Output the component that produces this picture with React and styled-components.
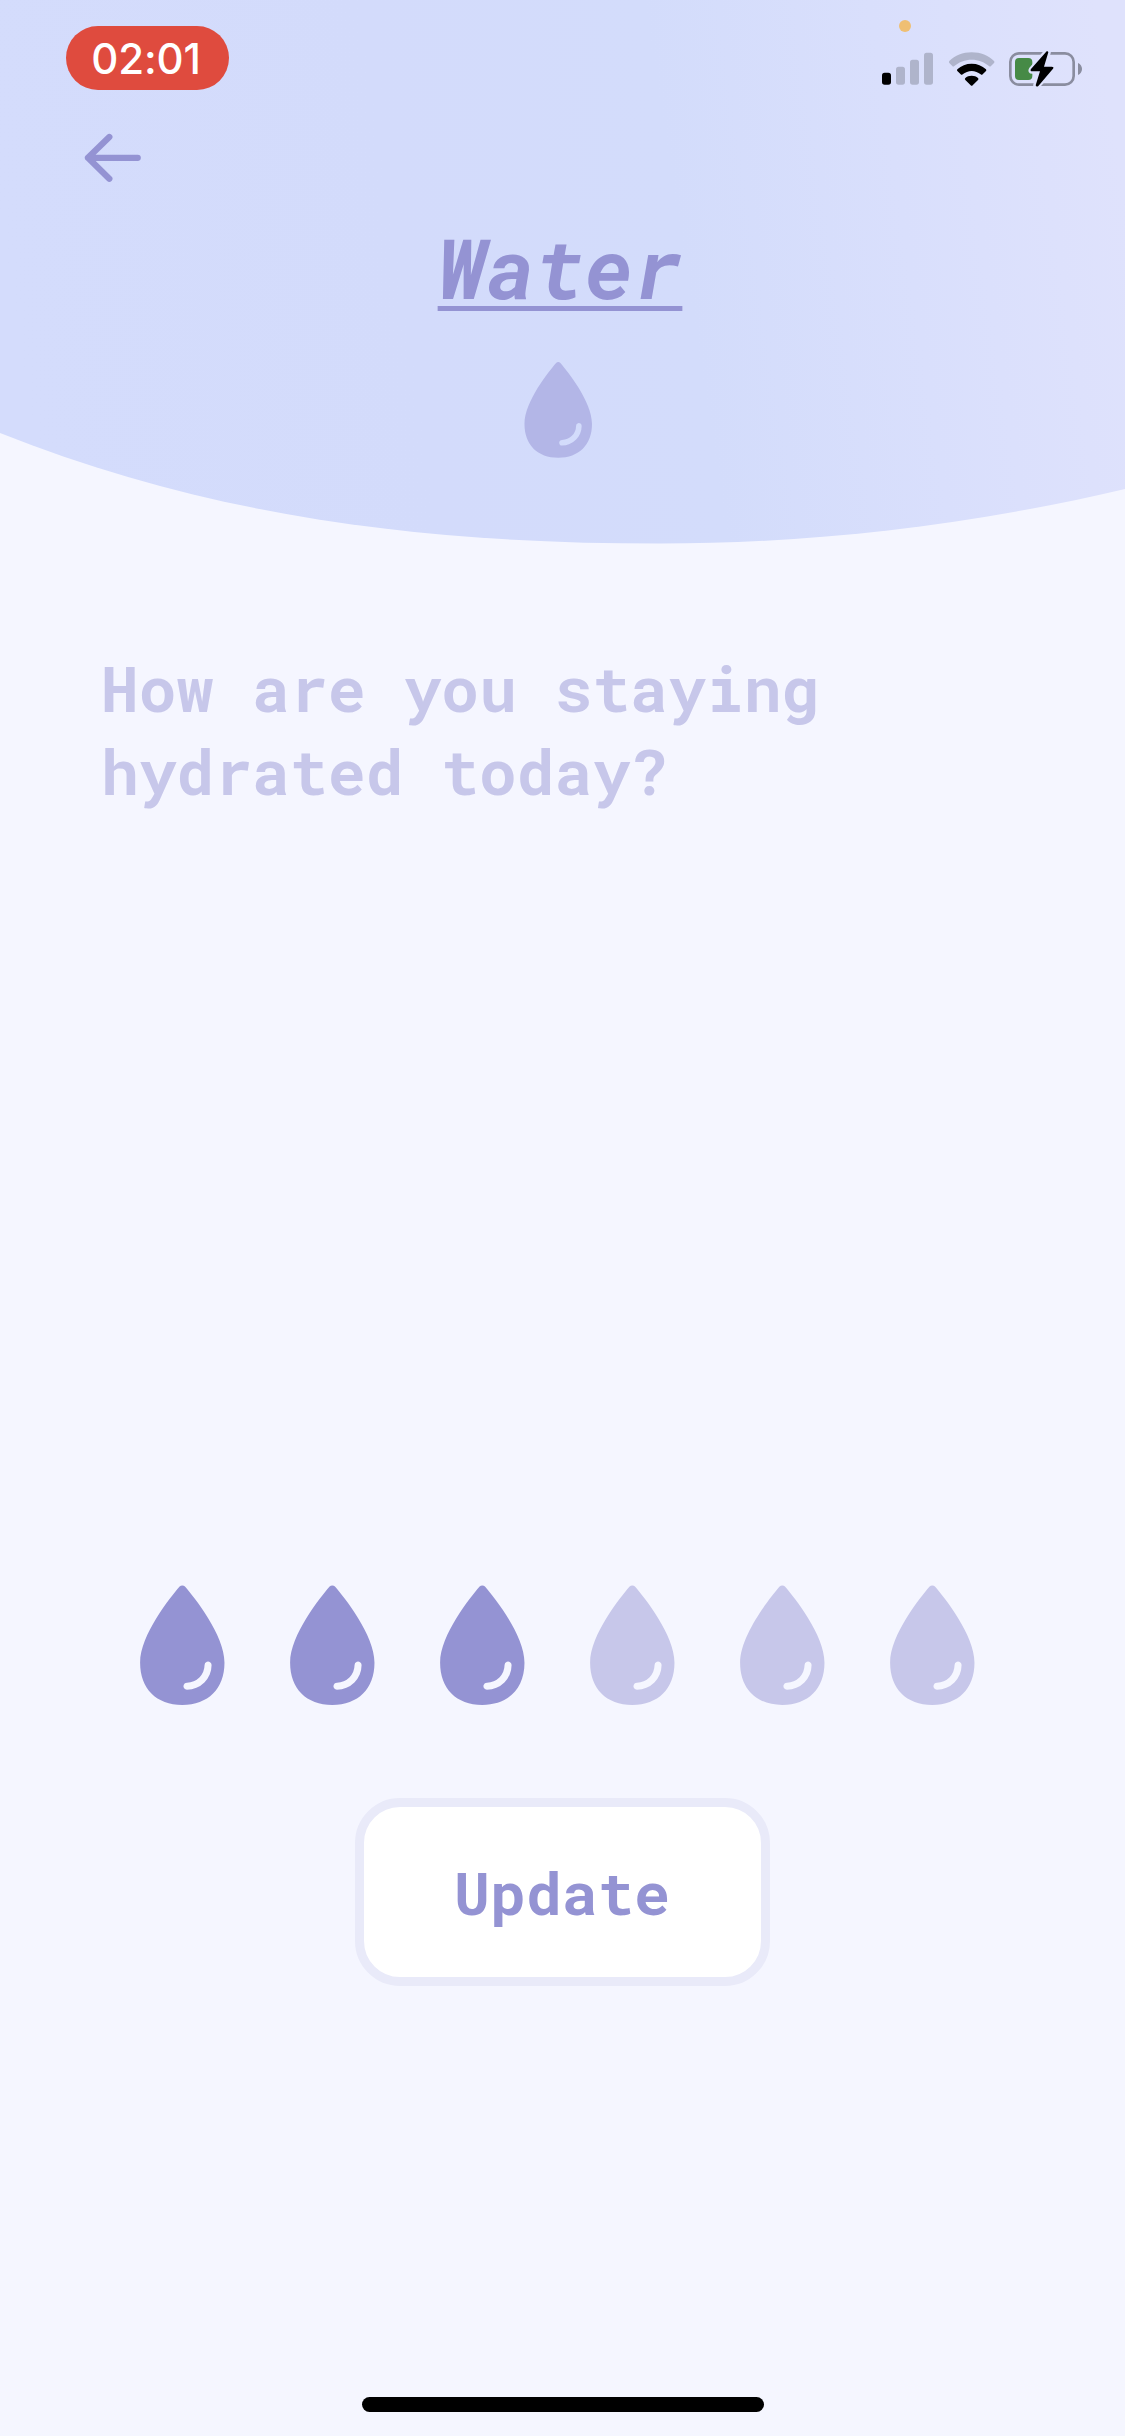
import React, { useState } from "react";
import styled, { createGlobalStyle } from "styled-components";

const GlobalStyle = createGlobalStyle`
  * { box-sizing: border-box; }
  html, body { margin: 0; padding: 0; background: #f5f6ff; }
`;

const colors = {
  page: "#f5f6ff",
  primary: "#9493d3",
  muted: "#c7c7ea",
};

const Screen = styled.main`
  width: 1125px;
  height: 2436px;
  display: flex;
  flex-direction: column;
  overflow: hidden;
  background: ${colors.page};
  font-family: "Roboto Mono", "DejaVu Sans Mono", monospace;
`;

const Header = styled.header`
  position: relative;
  isolation: isolate;
  height: 544px;
  display: flex;
  flex-direction: column;
`;

const Wave = styled.svg`
  position: absolute;
  inset: 0;
  z-index: -1;
  display: block;
`;

const StatusBar = styled.div`
  height: 114px;
  padding: 26px 43px 0 65.5px;
  display: flex;
  justify-content: space-between;
  align-items: flex-start;
`;

const TimePill = styled.div`
  width: 163px;
  height: 64px;
  padding-right: 2px;
  border-radius: 32px;
  background: #df4b3e;
  color: #fff;
  display: flex;
  align-items: center;
  justify-content: center;
  font-family: Inter, "Liberation Sans", sans-serif;
  font-size: 42px;
  font-weight: 500;
  line-height: 65px;
  letter-spacing: -0.2px;
`;

const Indicators = styled.div`
  position: relative;
  display: flex;
  align-items: flex-start;
  gap: 15.5px;
  padding-top: 26px;
`;

const RecordingDot = styled.span`
  position: absolute;
  top: -6px;
  left: 17px;
  width: 12px;
  height: 12px;
  border-radius: 50%;
  background: #efbf73;
`;

const Glyph = styled.svg`
  display: block;
  flex: none;
  overflow: visible;
`;

const BackButton = styled.button`
  width: 64px;
  height: 54px;
  margin: 17px 0 0 80px;
  padding: 0;
  border: 0;
  background: none;
`;

const TitleBlock = styled.div`
  display: flex;
  flex-direction: column;
  align-items: center;
  margin-top: 27px;
  padding-right: 5px;
`;

const Title = styled.h1`
  margin: 0;
  color: ${colors.primary};
  font-size: 83.4px;
  line-height: 111px;
  font-weight: 700;
  font-style: italic;
  text-decoration: underline;
  text-decoration-thickness: 5px;
  text-underline-offset: 7px;
  text-decoration-skip-ink: none;
`;

const TitleIcon = styled.div`
  margin-top: 26px;
  padding-right: 4px;
`;

const Question = styled.h2`
  margin: 102px 200px 0 101px;
  color: ${colors.muted};
  font-size: 63px;
  line-height: 83px;
  font-weight: 700;
`;

const DropRow = styled.div`
  display: flex;
  margin: 756.5px 0 0 107px;
`;

const DropButton = styled.button`
  width: 150px;
  height: 150px;
  padding: 0;
  border: 0;
  background: none;
`;

const UpdateButton = styled.button`
  align-self: center;
  width: 415px;
  height: 188px;
  margin-top: 79.5px;
  padding: 0 1px 1px 0;
  border: 9px solid #e9eaf9;
  border-radius: 45px;
  background: #fff;
  color: ${colors.primary};
  font-family: inherit;
  font-size: 60px;
  line-height: 79px;
  font-weight: 700;
`;

const HomeIndicator = styled.div`
  align-self: center;
  width: 402px;
  height: 15px;
  margin: auto 0 24px;
  border-radius: 8px;
  background: #000;
`;

function HeaderShape() {
  return (
    <Wave width="1125" height="544" viewBox="0 0 1125 544">
      <defs>
        <linearGradient id="sky" gradientUnits="userSpaceOnUse" x1="20" y1="360" x2="1125" y2="190">
          <stop offset="0" stopColor="#d4dcfc" />
          <stop offset="0.35" stopColor="#d3dbfb" />
          <stop offset="0.6" stopColor="#d3dcfb" />
          <stop offset="0.8" stopColor="#d9dffc" />
          <stop offset="1" stopColor="#dfe2fc" />
        </linearGradient>
      </defs>
      <path
        d="M0 0H1125V489C970 525.4 815 543.5 660 543.5C440 543.5 220 521 0 433Z"
        fill="url(#sky)"
      />
    </Wave>
  );
}

function Drop({ size, color }) {
  return (
    <Glyph width={size} height={size} viewBox="-1 0 512 512">
      <path
        fill={color}
        d="M265.12 60.12a12 12 0 0 0-18.23 0C215.23 97.15 112 225.17 112 320c0 88.37 55.64 144 144 144s144-55.63 144-144c0-94.83-103.23-222.85-134.88-259.88zM272 412a12 12 0 0 1-11.34-16 11.89 11.89 0 0 1 11.41-8A60.06 60.06 0 0 0 332 328.07a11.89 11.89 0 0 1 8-11.41A12 12 0 0 1 356 328a84.09 84.09 0 0 1-84 84z"
      />
    </Glyph>
  );
}

function Signal() {
  return (
    <Glyph width="51" height="33" viewBox="66 157 153 99">
      <rect x="66" y="219" width="27" height="36" rx="8" fill="#000" />
      <g fill="#afb4cb">
        <rect x="108" y="201" width="27" height="54" rx="8" />
        <rect x="150" y="180" width="27" height="75" rx="8" />
        <rect x="192" y="159" width="27" height="96" rx="8" />
      </g>
    </Glyph>
  );
}

function Wifi() {
  return (
    <Glyph width="45" height="34" viewBox="265 154 135 102">
      <path
        fill="#afb4cb"
        d="M333 155C306 155 283 165 266 181Q263 184 266 187L275 196Q278 199 281 196C295 184 313 177 333 177S371 184 385 196Q388 199 391 196L400 187Q403 184 400 181C383 165 360 155 333 155Z"
      />
      <path
        d="M333 189C316 189 302 195 290 206Q288 209 290 211L300 221Q303 224 306 221C314 215 323 211 333 211S352 215 360 221Q363 224 366 221L376 211Q378 209 376 206C364 195 350 189 333 189Z"
      />
      <path d="M333 225C325 225 319 227 314 232Q311 235 314 238L330 254Q333 257 336 254L352 238Q355 235 352 232C347 227 341 225 333 225Z" />
    </Glyph>
  );
}

function Battery() {
  return (
    <Glyph width="73" height="36" viewBox="447 156 219 108">
      <defs>
        <mask id="bolt-gap" maskUnits="userSpaceOnUse" x="440" y="145" width="240" height="125">
          <rect x="440" y="145" width="240" height="125" fill="#fff" />
          <path
            d="M560 154L514 208Q510 214 517 214H540L527 256Q529 262 534 257L579 207Q583 201 575 200H552L565 157Q564 152 560 154Z"
            fill="#000"
            stroke="#000"
            strokeWidth="15"
            strokeLinejoin="round"
          />
        </mask>
      </defs>
      <g mask="url(#bolt-gap)">
        <rect x="451" y="160" width="190" height="94" rx="26" fill="none" stroke="#8a8d9f" strokeWidth="8" />
        <rect x="465" y="174" width="52" height="66" rx="12" fill="#468a46" />
      </g>
      <path d="M654 189C670 195 670 219 654 225Z" fill="#8a8d9f" />
      <path d="M560 154L513 207Q509 214 517 214H540L527 256Q529 262 535 258L579 206Q583 200 575 200H552L565 157Q564 152 560 154Z" />
    </Glyph>
  );
}

function Arrow() {
  return (
    <Glyph width="64" height="54" viewBox="80 131 64 54">
      <path
        d="M137.7 157.8H88M109.3 137L88 157.8L109.3 178.7"
        fill="none"
        stroke={colors.primary}
        strokeWidth="6.3"
        strokeLinecap="round"
        strokeLinejoin="round"
      />
    </Glyph>
  );
}

export default function App() {
  const [glasses, setGlasses] = useState(3);
  return (
    <Screen>
      <GlobalStyle />
      <Header>
        <HeaderShape />
        <StatusBar>
          <TimePill>02:01</TimePill>
          <Indicators>
            <RecordingDot />
            <Signal />
            <Wifi />
            <Battery />
          </Indicators>
        </StatusBar>
        <BackButton aria-label="Back">
          <Arrow />
        </BackButton>
        <TitleBlock>
          <Title>Water</Title>
          <TitleIcon>
            <Drop size={120} color="#b3b6e7" />
          </TitleIcon>
        </TitleBlock>
      </Header>
      <Question>How are you staying hydrated today?</Question>
      <DropRow>
        {[1, 2, 3, 4, 5, 6].map((n) => (
          <DropButton key={n} aria-label={`${n}`} onClick={() => setGlasses(n)}>
            <Drop size={150} color={n <= glasses ? colors.primary : colors.muted} />
          </DropButton>
        ))}
      </DropRow>
      <UpdateButton>Update</UpdateButton>
      <HomeIndicator />
    </Screen>
  );
}
